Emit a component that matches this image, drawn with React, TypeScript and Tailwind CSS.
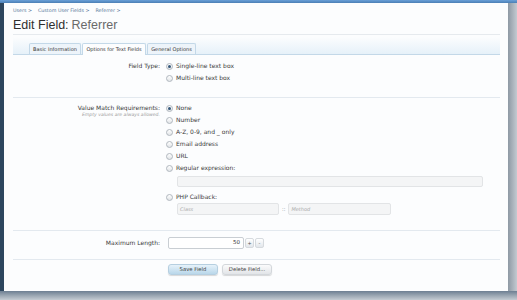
import React from "react";

const Radio = ({ checked }: { checked?: boolean }) => (
  <span className="w-[7px] h-[7px] rounded-full border border-[#b0b7be] bg-gradient-to-b from-[#ffffff] to-[#e2e5e8] flex items-center justify-center shrink-0">
    {checked && <span className="w-[3px] h-[3px] rounded-full bg-[#35587a]" />}
  </span>
);

const Opt = ({ label, checked }: { label: string; checked?: boolean }) => (
  <div className="flex items-center h-[12px] gap-[3px]">
    <Radio checked={checked} />
    <span className="text-[6px] text-[#3a3a3a] leading-none">{label}</span>
  </div>
);

const Sep = () => <div className="h-px bg-[#e3e9ef] mr-[8px] ml-[9px]" />;

export default function App() {
  return (
    <div
      className="w-[517px] h-[300px] overflow-hidden flex flex-col bg-[#a3adb7]"
      style={{ fontFamily: '"DejaVu Sans", Verdana, sans-serif' }}
    >
      <div className="h-[3px] bg-gradient-to-b from-[#6aa0d8] to-[#4b7fb5] shrink-0" />
      <div className="flex h-[288px] shrink-0">
        <div className="w-[4px] bg-[#2d465e] shrink-0" />
        <div className="w-[504px] bg-[#fcfdfe] flex flex-col pt-[5px]">
          <div className="pl-[9px] pr-[8px] flex gap-[6px] text-[4.8px] text-[#557799] leading-none h-[6px] items-center">
            <span>Users &gt;</span>
            <span>Custom User Fields &gt;</span>
            <span>Referrer &gt;</span>
          </div>
          <div
            className="pl-[9px] mt-[4px] h-[14px] flex items-center text-[12.5px] leading-none"
            style={{ fontFamily: '"Liberation Sans", Arial, sans-serif' }}
          >
            <span className="text-[#2e2e2e]">Edit Field:</span>
            <span className="text-[#6a6a6a] ml-[3px]">Referrer</span>
          </div>
          <div className="h-px bg-[#e6eaee] ml-[9px] mr-[8px] mt-[2px]" />
          <div className="ml-[9px] mr-[8px] mt-[2px] h-[18px] bg-gradient-to-b from-[#fcfdfe] to-[#e6f1f9] border-b border-[#c3d8e8] flex items-end pl-[16px] gap-px">
            <div className="w-[52px] h-[11px] border border-b-0 border-[#c3d8e8] rounded-t-[2px] bg-[#edf4fa] flex items-center justify-center text-[5px] text-[#333] leading-none">
              Basic Information
            </div>
            <div className="w-[64px] h-[12px] -mb-px border border-b-0 border-[#c3d8e8] rounded-t-[2px] bg-[#fcfdfe] flex items-center justify-center text-[5px] text-[#333] leading-none pb-px">
              Options for Text Fields
            </div>
            <div className="w-[49px] h-[11px] border border-b-0 border-[#c3d8e8] rounded-t-[2px] bg-[#edf4fa] flex items-center justify-center text-[5px] text-[#333] leading-none">
              General Options
            </div>
          </div>

          {/* Field type */}
          <div className="flex pt-[5px] pb-[13px]">
            <div className="w-[156px] flex justify-end h-[12px] items-center text-[6px] text-[#3a3a3a] leading-none">
              Field Type:
            </div>
            <div className="ml-[6px] flex flex-col">
              <Opt label="Single-line text box" checked />
              <Opt label="Multi-line text box" />
            </div>
          </div>
          <Sep />

          {/* Value match */}
          <div className="flex pt-[4px] pb-[15px]">
            <div className="w-[156px] flex flex-col items-end leading-none">
              <div className="h-[12px] flex items-center text-[6px] text-[#3a3a3a]">Value Match Requirements:</div>
              <div className="text-[4.6px] italic text-[#a0a0a0] -mt-[1px]">Empty values are always allowed.</div>
            </div>
            <div className="ml-[6px] flex flex-col">
              <Opt label="None" checked />
              <Opt label="Number" />
              <Opt label="A-Z, 0-9, and _ only" />
              <Opt label="Email address" />
              <Opt label="URL" />
              <Opt label="Regular expression:" />
              <div className="ml-[11px] mt-[2px] w-[306px] h-[11px] rounded-[2px] border border-[#e2e4e6] bg-[#f4f5f6]" />
              <div className="mt-[4px]">
                <Opt label="PHP Callback:" />
              </div>
              <div className="ml-[11px] flex items-center gap-[3px]">
                <div className="w-[102px] h-[12px] rounded-[2px] border border-[#e2e4e6] bg-[#f4f5f6] flex items-center pl-[2px] text-[5px] italic text-[#aaa] leading-none">
                  Class
                </div>
                <span className="text-[5px] text-[#555] leading-none">::</span>
                <div className="w-[103px] h-[12px] rounded-[2px] border border-[#e2e4e6] bg-[#f4f5f6] flex items-center pl-[2px] text-[5px] italic text-[#aaa] leading-none">
                  Method
                </div>
              </div>
            </div>
          </div>
          <Sep />

          {/* Max length */}
          <div className="flex pt-[6px] pb-[10px]">
            <div className="w-[156px] flex justify-end h-[12px] items-center text-[6px] text-[#3a3a3a] leading-none">
              Maximum Length:
            </div>
            <div className="ml-[8px] flex items-center gap-px">
              <div className="w-[76px] h-[12px] rounded-[2px] border border-[#c9ced3] bg-white flex items-center justify-end pr-[3px] text-[5.5px] text-[#333] leading-none">
                50
              </div>
              <div className="w-[9px] h-[10px] rounded-[2px] border border-[#d6dade] bg-gradient-to-b from-[#ffffff] to-[#e3e7eb] flex items-center justify-center text-[5px] text-[#555] leading-none">
                +
              </div>
              <div className="w-[9px] h-[10px] rounded-[2px] border border-[#d6dade] bg-gradient-to-b from-[#ffffff] to-[#e3e7eb] flex items-center justify-center text-[5px] text-[#555] leading-none">
                -
              </div>
            </div>
          </div>
          <Sep />

          {/* Buttons */}
          <div className="flex pt-[4px] pl-[164px] gap-[4px]">
            <div className="w-[50px] h-[11px] rounded-[3px] border border-[#b6cfe0] bg-gradient-to-b from-[#e6f2fa] to-[#b9d7ea] flex items-center justify-center text-[5.3px] text-[#444] leading-none shadow-[0_1px_1px_rgba(0,0,0,0.15)]">
              Save Field
            </div>
            <div className="w-[50px] h-[11px] rounded-[3px] border border-[#d3d7db] bg-gradient-to-b from-[#fbfbfc] to-[#e2e5e8] flex items-center justify-center text-[5.3px] text-[#444] leading-none shadow-[0_1px_1px_rgba(0,0,0,0.15)]">
              Delete Field...
            </div>
          </div>
        </div>
        <div className="flex-1 bg-gradient-to-r from-[#8e99a4] to-[#c3cad1]" />
      </div>
      <div className="flex-1 bg-gradient-to-b from-[#6d7f92] via-[#9aa6b2] to-[#c4cbd2]" />
    </div>
  );
}
